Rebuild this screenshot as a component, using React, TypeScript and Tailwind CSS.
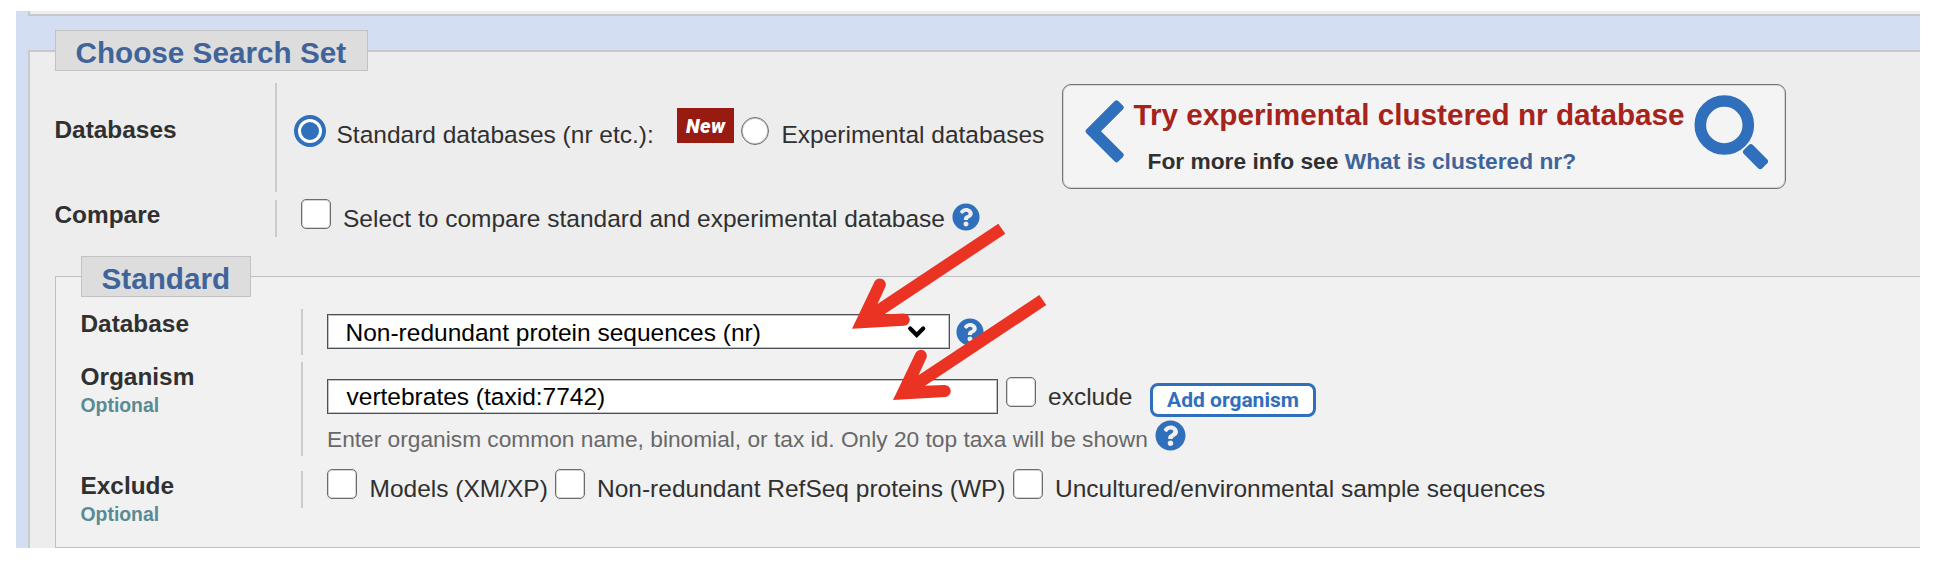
import React from "react";
import { FaQuestionCircle } from "react-icons/fa";

const Legend = ({ children, className }: { children: React.ReactNode; className: string }) => (
  <legend
    className={`h-[41px] border border-[#c3c3c5] bg-[#dddddd] pl-[19.5px] pt-[5px] text-[29.7px] leading-[34px] font-bold whitespace-nowrap text-[#40649a] ${className}`}
  >
    {children}
  </legend>
);

const Row = ({ label, optional, className, labelClass = "", children }: {
  label: string;
  optional?: boolean;
  className: string;
  labelClass?: string;
  children: React.ReactNode;
}) => (
  <div className={`flex items-start ${className}`}>
    <div className={`w-[220px] shrink-0 text-[24.4px] font-bold ${labelClass}`}>
      <div className="-ml-[0.5px]">{label}</div>
      {optional && <div className="mt-[3px] -ml-[0.5px] text-[19.4px] leading-[22px] text-[#5a8a94]">Optional</div>}
    </div>
    <div className="h-full border-l-2 border-[#cbcbcd]">{children}</div>
  </div>
);

const Check = ({ className }: { className: string }) => (
  <span role="checkbox" aria-checked="false" className={`block size-[30px] shrink-0 rounded-[5px] border border-[#6c6c6c] bg-white shadow-[inset_0_0_0_1px_#d4d4d4] ${className}`} />
);

const Help = ({ className }: { className: string }) => (
  <FaQuestionCircle className={`shrink-0 text-[#2f6fbb] ${className}`} />
);

const Text = ({ children, className }: { children: React.ReactNode; className: string }) => (
  <span className={`block shrink-0 ${className}`}>{children}</span>
);

const arrow =
  "M852 328.7L874.6 281.6A6 6 0 0 1 885.5 286.5L877.5 304L998.3 223.7L1005.3 233.7L884 314.5L903.3 313.6A6 6 0 0 1 904 325.8Z";

export default function App() {
  return (
    <div className="relative h-[562px] w-[1934px] overflow-hidden bg-white pt-[11px] pl-4 font-['Liberation_Sans',Arial,sans-serif] text-[24.5px] leading-[28px] whitespace-nowrap text-[#303030]">
      <div className="h-[537px] w-[1904px] overflow-hidden bg-[#d3def2] pl-3">
        <div className="h-[5px] w-[1920px] border-b-2 border-l-2 border-[#c6c8cd] bg-[#eeeeee]" />
        <fieldset className="mt-[14px] h-[560px] w-[1920px] min-w-0 border-2 border-[#c8c9cd] bg-[#ededed] pl-[25px]">
          <Legend className="w-[313px]">Choose Search Set</Legend>

          <Row label="Databases" className="mt-3 h-[109px]" labelClass="pt-[33px]">
            <div className="flex items-start">
              <span role="radio" aria-checked="true" className="mt-8 ml-[17px] flex size-8 shrink-0 items-center justify-center rounded-full border-4 border-[#2f6fbb] bg-white">
                <span className="size-[18px] rounded-full bg-[#2f6fbb]" />
              </span>
              <Text className="mt-[38px] ml-[10.5px] w-[340.5px]">Standard databases (nr etc.):</Text>
              <span className="mt-[25px] h-[35px] w-[57px] shrink-0 bg-[#981b12] pt-[7px] pl-[9px] font-['Roboto',sans-serif] text-[20px] leading-[22px] font-black tracking-[0.4px] text-white italic">New</span>
              <span role="radio" aria-checked="false" className="mt-[34px] ml-[7px] size-7 shrink-0 rounded-full border border-[#6c6c6c] bg-white shadow-[inset_0_0_0_1px_#c8c8c8]" />
              <Text className="mt-[38px] ml-[12.5px] w-[280.5px]">Experimental databases</Text>
              <div className="mt-px flex h-[105px] w-[724px] shrink-0 items-start rounded-[9px] border border-[#747474] bg-[#f4f4f4] shadow-[inset_0_0_0_1px_#d4d4d4]">
                <svg className="mt-[14px] ml-[21px] h-[66px] w-[42px] shrink-0" viewBox="1084 99 42 66" fill="#2f6fbb" stroke="#2f6fbb" strokeWidth="5" strokeLinejoin="round">
                  <path d="M1088 131.3L1116.5 102.8L1121.3 107.5L1097.5 131.3L1121.3 155.1L1116.5 159.8Z" />
                </svg>
                <div className="ml-[7.5px] w-[557px] shrink-0 pt-[13px] font-bold">
                  <div className="text-[29.7px] leading-[34px] text-[#a6231c]">Try experimental clustered nr database</div>
                  <div className="mt-4 ml-[14px] text-[22.75px] leading-[26px]">
                    For more info see <a className="text-[#40649a]">What is clustered nr?</a>
                  </div>
                </div>
                <svg className="mt-[9px] h-[78px] w-[80px] shrink-0" viewBox="1690 93 80 78">
                  <circle cx="1723.3" cy="124" r="24" fill="none" stroke="#2f6fbb" strokeWidth="11.6" />
                  <rect x="1741.5" y="149.2" width="26" height="12.8" rx="3" transform="rotate(45 1754.5 155.6)" fill="#2f6fbb" />
                </svg>
              </div>
            </div>
          </Row>

          <Row label="Compare" className="mt-2 h-[37px]" labelClass="pt-px">
            <div className="flex items-start">
              <Check className="-mt-px ml-6" />
              <Text className="mt-[5px] ml-3 w-[608.5px]">Select to compare standard and experimental database</Text>
              <Help className="mt-[2.5px] size-7" />
            </div>
          </Row>

          <fieldset className="mt-[19px] h-[292px] w-[1900px] min-w-0 border border-[#bfc0c2] bg-[#f1f1f1] pl-[25px]">
            <Legend className="w-[170px]">Standard</Legend>

            <Row label="Database" className="mt-3 h-[46px]" labelClass="pt-px">
              <div className="flex items-start">
                <div role="combobox" aria-expanded="false" className="mt-[5px] ml-6 flex h-[35px] w-[623px] shrink-0 items-start border border-[#4c5057] bg-white text-black shadow-[inset_0_0_0_1px_#bfc1c4]">
                  <Text className="mt-[4px] ml-[17.5px] w-[561.5px]">Non-redundant protein sequences (nr)</Text>
                  <svg className="mt-[9px] h-[16px] w-[20px]" viewBox="0 0 20 16" fill="none" stroke="#000" strokeWidth="4.2" strokeLinecap="round">
                    <path d="M3.2 4.5L9.7 11L16.2 4.5" />
                  </svg>
                </div>
                <Help className="mt-[8.5px] ml-[6px] size-7" />
              </div>
            </Row>

            <Row label="Organism" optional className="mt-[7px] h-[94px]" labelClass="pt-[0.5px]">
              <div className="flex items-start">
                <div role="textbox" className="mt-[17px] ml-6 h-[35px] w-[671px] shrink-0 border border-[#4c5057] bg-white pt-[3px] pl-[18.5px] text-black shadow-[inset_0_0_0_1px_#bfc1c4]">vertebrates (taxid:7742)</div>
                <Check className="mt-[15px] ml-[7.5px]" />
                <Text className="mt-[21px] ml-[12.5px] w-[102px]">exclude</Text>
                <button className="mt-[21px] h-[34px] w-[166px] rounded-[8px] border-3 border-[#2f6fbb] bg-white text-center font-['Roboto',sans-serif] text-[21px] leading-[28px] font-bold text-[#2f6fbb]">Add organism</button>
              </div>
              <div className="-mt-px flex items-start">
                <Text className="mt-[10px] ml-6 w-[828px] text-[22.73px] leading-[26px] text-[#686868]">
                  Enter organism common name, binomial, or tax id. Only 20 top taxa will be shown
                </Text>
                <Help className="mt-1 size-[31px]" />
              </div>
            </Row>

            <Row label="Exclude" optional className="mt-[15px] h-[37px]" labelClass="pt-[0.5px]">
              <div className="flex items-start">
                <Check className="-mt-[2px] ml-6" />
                <Text className="mt-1 ml-[12.5px] w-[185.5px]">Models (XM/XP)</Text>
                <Check className="-mt-[2px]" />
                <Text className="mt-1 ml-3 w-[416px]">Non-redundant RefSeq proteins (WP)</Text>
                <Check className="-mt-[2px]" />
                <Text className="mt-1 ml-3">Uncultured/environmental sample sequences</Text>
              </div>
            </Row>
          </fieldset>
        </fieldset>
      </div>

      <svg className="pointer-events-none absolute top-0 left-0" width="1934" height="562" fill="#ea3323" aria-hidden="true">
        <path d={arrow} />
        <path d={arrow} transform="translate(41 71.3)" />
      </svg>
    </div>
  );
}
